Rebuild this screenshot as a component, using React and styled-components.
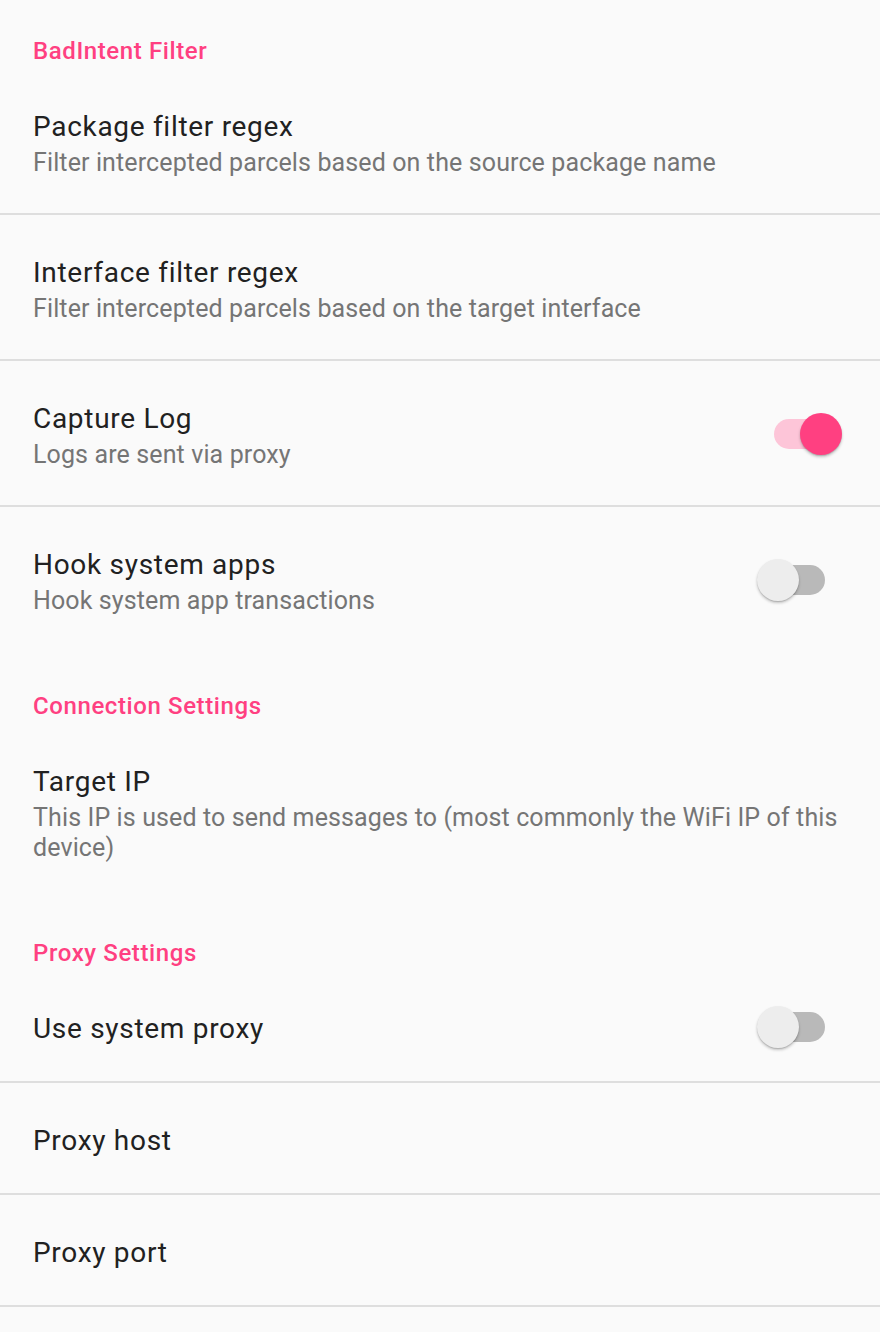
import styled, { createGlobalStyle } from 'styled-components';

const GlobalStyle = createGlobalStyle`
  html, body {
    margin: 0;
    padding: 0;
    background: #fafafa;
  }

  body {
    font-family: Roboto, "Noto Sans", "Liberation Sans", sans-serif;
    -webkit-font-smoothing: antialiased;
  }
`;

const Screen = styled.div`
  background: #fafafa;
  min-height: 1332px;
  overflow: hidden;
`;

const CategoryTitle = styled.h2`
  margin: 0;
  padding: ${(props) => (props.first ? '35px' : '39px')} 33px 2px;
  font-size: 24px;
  line-height: 32px;
  font-weight: 500;
  letter-spacing: 0.6px;
  color: #ff4081;
`;

const Row = styled.div`
  display: flex;
  align-items: center;
  padding: 40px 20px 35px 33px;
  border-bottom: ${(props) => (props.divider ? '2px solid #dedede' : 'none')};
`;

const Texts = styled.div`
  flex: 1;
  min-width: 0;
`;

const Title = styled.div`
  font-size: 28px;
  line-height: 35px;
  letter-spacing: 0.7px;
  color: #212121;
`;

const Summary = styled.div`
  margin-top: 4px;
  font-size: 25px;
  line-height: 30px;
  letter-spacing: 0.12px;
  color: #757575;
`;

/* negative vertical margins: the switch must not make a one-line row taller */
const Track = styled.span`
  position: relative;
  flex: none;
  width: 85px;
  height: 42px;
  margin: -6px 18px -2px 24px;

  &::before {
    content: '';
    position: absolute;
    left: 17px;
    top: 6px;
    width: 51px;
    height: 30px;
    border-radius: 15px;
    background: ${(props) => (props.on ? '#fdc5d8' : '#b9b9b9')};
  }
`;

const Thumb = styled.span`
  position: absolute;
  top: 0;
  left: ${(props) => (props.on ? '43px' : '0')};
  width: 42px;
  height: 42px;
  border-radius: 50%;
  background: ${(props) => (props.on ? '#ff4081' : '#ededed')};
  box-shadow: 0 2px 3px rgba(0, 0, 0, 0.22), 0 1px 1px rgba(0, 0, 0, 0.12);
`;

function Switch({ on }) {
  return (
    <Track on={on}>
      <Thumb on={on} />
    </Track>
  );
}

function Preference({ title, summary, toggle, divider }) {
  return (
    <Row divider={divider}>
      <Texts>
        <Title>{title}</Title>
        {summary && <Summary>{summary}</Summary>}
      </Texts>
      {toggle !== undefined && <Switch on={toggle} />}
    </Row>
  );
}

const categories = [
  {
    name: 'BadIntent Filter',
    items: [
      {
        title: 'Package filter regex',
        summary: 'Filter intercepted parcels based on the source package name',
      },
      {
        title: 'Interface filter regex',
        summary: 'Filter intercepted parcels based on the target interface',
      },
      { title: 'Capture Log', summary: 'Logs are sent via proxy', toggle: true },
      {
        title: 'Hook system apps',
        summary: 'Hook system app transactions',
        toggle: false,
      },
    ],
  },
  {
    name: 'Connection Settings',
    items: [
      {
        title: 'Target IP',
        summary:
          'This IP is used to send messages to (most commonly the WiFi IP of this device)',
      },
    ],
  },
  {
    name: 'Proxy Settings',
    items: [
      { title: 'Use system proxy', toggle: false },
      { title: 'Proxy host' },
      { title: 'Proxy port', divider: true },
    ],
  },
];

export default function App() {
  return (
    <Screen>
      <GlobalStyle />
      {categories.map((cat, ci) => (
        <section key={cat.name}>
          <CategoryTitle first={ci === 0}>{cat.name}</CategoryTitle>
          {cat.items.map((item, i) => (
            <Preference
              key={item.title}
              {...item}
              divider={item.divider || i < cat.items.length - 1}
            />
          ))}
        </section>
      ))}
    </Screen>
  );
}
